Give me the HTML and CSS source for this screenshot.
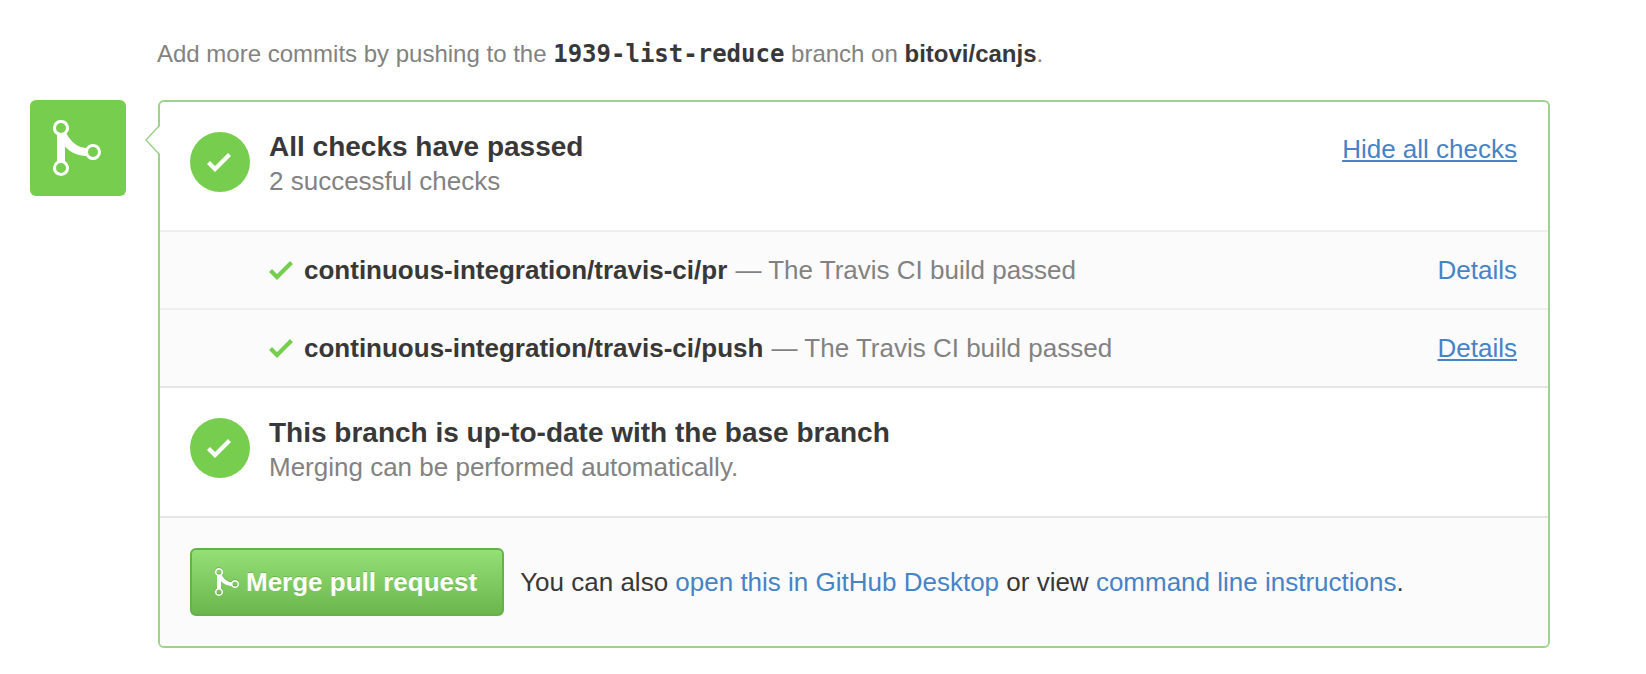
FILE: index.html
```html
<!DOCTYPE html>
<html lang="en">
<head>
<meta charset="utf-8">
<title>Merge pull request</title>
<link rel="stylesheet" href="styles.css">
</head>
<body>
<svg class="sprite" aria-hidden="true">
  <symbol id="icon-merge" viewBox="0 0 48 56">
    <path fill="currentColor" fill-rule="evenodd" d="M8 0a8 8 0 0 1 5.500 13.800C18 22 24.500 27.500 33.070 28A8 8 0 1 1 33.070 36C25 35.500 18 33 12 26.500V41.070A8 8 0 1 1 4 41.070V14.930A8 8 0 0 1 8 0zM8 3a5 5 0 1 0 0 10a5 5 0 0 0 0-10zM40 27a5 5 0 1 0 0 10a5 5 0 0 0 0-10zM8 43a5 5 0 1 0 0 10a5 5 0 0 0 0-10z"/>
  </symbol>
  <symbol id="icon-check" viewBox="0 0 24 19">
    <path fill="currentColor" d="M24 3 8 19 0 11 3 8 8 13 21 0z"/>
  </symbol>
</svg>
<main class="merge">
  <p class="hint">Add more commits by pushing to the <strong class="branch">1939-list-reduce</strong> branch on <strong>bitovi/canjs</strong>.</p>
  <div class="timeline">
    <div class="badge"><svg class="badge-icon"><use href="#icon-merge"/></svg></div>
    <div class="panel">
      <svg class="pointer" viewBox="0 0 15 28" aria-hidden="true"><path fill="#fff" d="M15 0 1 14 15 28z"/><path fill="none" stroke="#9fd28b" stroke-width="1.500" d="M14 0 1 14 14 28"/></svg>
      <section class="status">
        <span class="circle"><svg class="check"><use href="#icon-check"/></svg></span>
        <div class="status-text">
          <h2>All checks have passed</h2>
          <p>2 successful checks</p>
        </div>
        <a class="underlined" href="#checks">Hide all checks</a>
      </section>
      <ul class="checks" id="checks">
        <li>
          <svg class="check"><use href="#icon-check"/></svg>
          <p><strong>continuous-integration/travis-ci/pr</strong> — The Travis CI build passed</p>
          <a href="#pr">Details</a>
        </li>
        <li>
          <svg class="check"><use href="#icon-check"/></svg>
          <p><strong>continuous-integration/travis-ci/push</strong> — The Travis CI build passed</p>
          <a class="underlined" href="#push">Details</a>
        </li>
      </ul>
      <section class="status">
        <span class="circle"><svg class="check"><use href="#icon-check"/></svg></span>
        <div class="status-text">
          <h2>This branch is up-to-date with the base branch</h2>
          <p>Merging can be performed automatically.</p>
        </div>
      </section>
      <footer class="actions">
        <button type="button"><svg class="button-icon"><use href="#icon-merge"/></svg>Merge pull request</button>
        <p>You can also <a href="#desktop">open this in GitHub Desktop</a> or view <a href="#cli">command line instructions</a>.</p>
      </footer>
    </div>
  </div>
</main>
</body>
</html>
```
FILE: styles.css
```css
* {
  box-sizing: border-box;
}

body {
  margin: 0;
  background: #fff;
  color: #383838;
  font: 26px/36px "Liberation Sans", Arial, sans-serif;
}

h2, p, ul {
  margin: 0;
  padding: 0;
}

a {
  color: #4683c7;
  text-decoration: none;
}

.underlined {
  text-decoration: underline;
  text-decoration-thickness: 2px;
  text-underline-offset: 2px;
}

.sprite {
  position: absolute;
  width: 0;
  height: 0;
}

.merge {
  padding: 36px 96px 26px 30px;
}

.hint {
  margin: 0 0 28px 127px;
  color: #828282;
  font-size: 24px;
}

.hint strong {
  color: #383838;
}

.hint .branch {
  font-family: "DejaVu Sans Mono", monospace;
}

.timeline {
  display: flex;
  align-items: flex-start;
  gap: 32px;
}

.badge {
  display: grid;
  place-items: center;
  flex: none;
  width: 96px;
  height: 96px;
  padding-right: 2px;
  border-radius: 6px;
  background: #77ce4e;
  color: #fff;
}

.badge-icon {
  width: 48px;
  height: 56px;
}

.panel {
  position: relative;
  flex: 1;
  min-width: 0;
  border: 2px solid #9fd28b;
  border-radius: 6px;
}

.pointer {
  position: absolute;
  top: 24px;
  left: -15px;
  width: 15px;
  height: 28px;
}

.status {
  display: flex;
  align-items: flex-start;
  gap: 19px;
  padding: 30px 31px 32px 30px;
}

.status .underlined {
  line-height: 34px;
}

.circle {
  display: grid;
  place-items: center;
  flex: none;
  width: 60px;
  height: 60px;
  padding-right: 2px;
  border-radius: 50%;
  background: #77ce4e;
  color: #fff;
}

.check {
  flex: none;
  width: 24px;
  height: 19px;
}

.status-text {
  flex: 1;
  margin-top: -2px;
  line-height: 34px;
}

.status-text h2 {
  font-size: 28px;
}

.status-text p {
  color: #828282;
}

.checks {
  border-bottom: 2px solid #e5e5e5;
  background: #fbfbfb;
  list-style: none;
}

.checks li {
  display: flex;
  align-items: center;
  padding: 20px 31px 20px 109px;
  border-top: 2px solid #eee;
}

.checks .check {
  margin-right: 11px;
  color: #77ce4e;
}

.checks p {
  flex: 1;
  color: #828282;
}

.checks strong {
  margin-right: 1px;
  color: #383838;
}

.actions {
  display: flex;
  align-items: center;
  gap: 16px;
  padding: 30px;
  border-top: 2px solid #e5e5e5;
  border-radius: 0 0 4px 4px;
  background: #fbfbfb;
}

button {
  display: flex;
  align-items: center;
  gap: 7px;
  padding: 14px 25px 14px 23px;
  border: 2px solid #65b248;
  border-radius: 6px;
  background: linear-gradient(#94e076, #6bb64d);
  color: #fff;
  font: bold 26px/36px "Liberation Sans", Arial, sans-serif;
  text-shadow: 0 -1px 0 rgba(0, 0, 0, 0.15);
}

.button-icon {
  width: 24px;
  height: 28px;
  filter: drop-shadow(0 -1px 0 rgba(0, 0, 0, 0.15));
}
```
